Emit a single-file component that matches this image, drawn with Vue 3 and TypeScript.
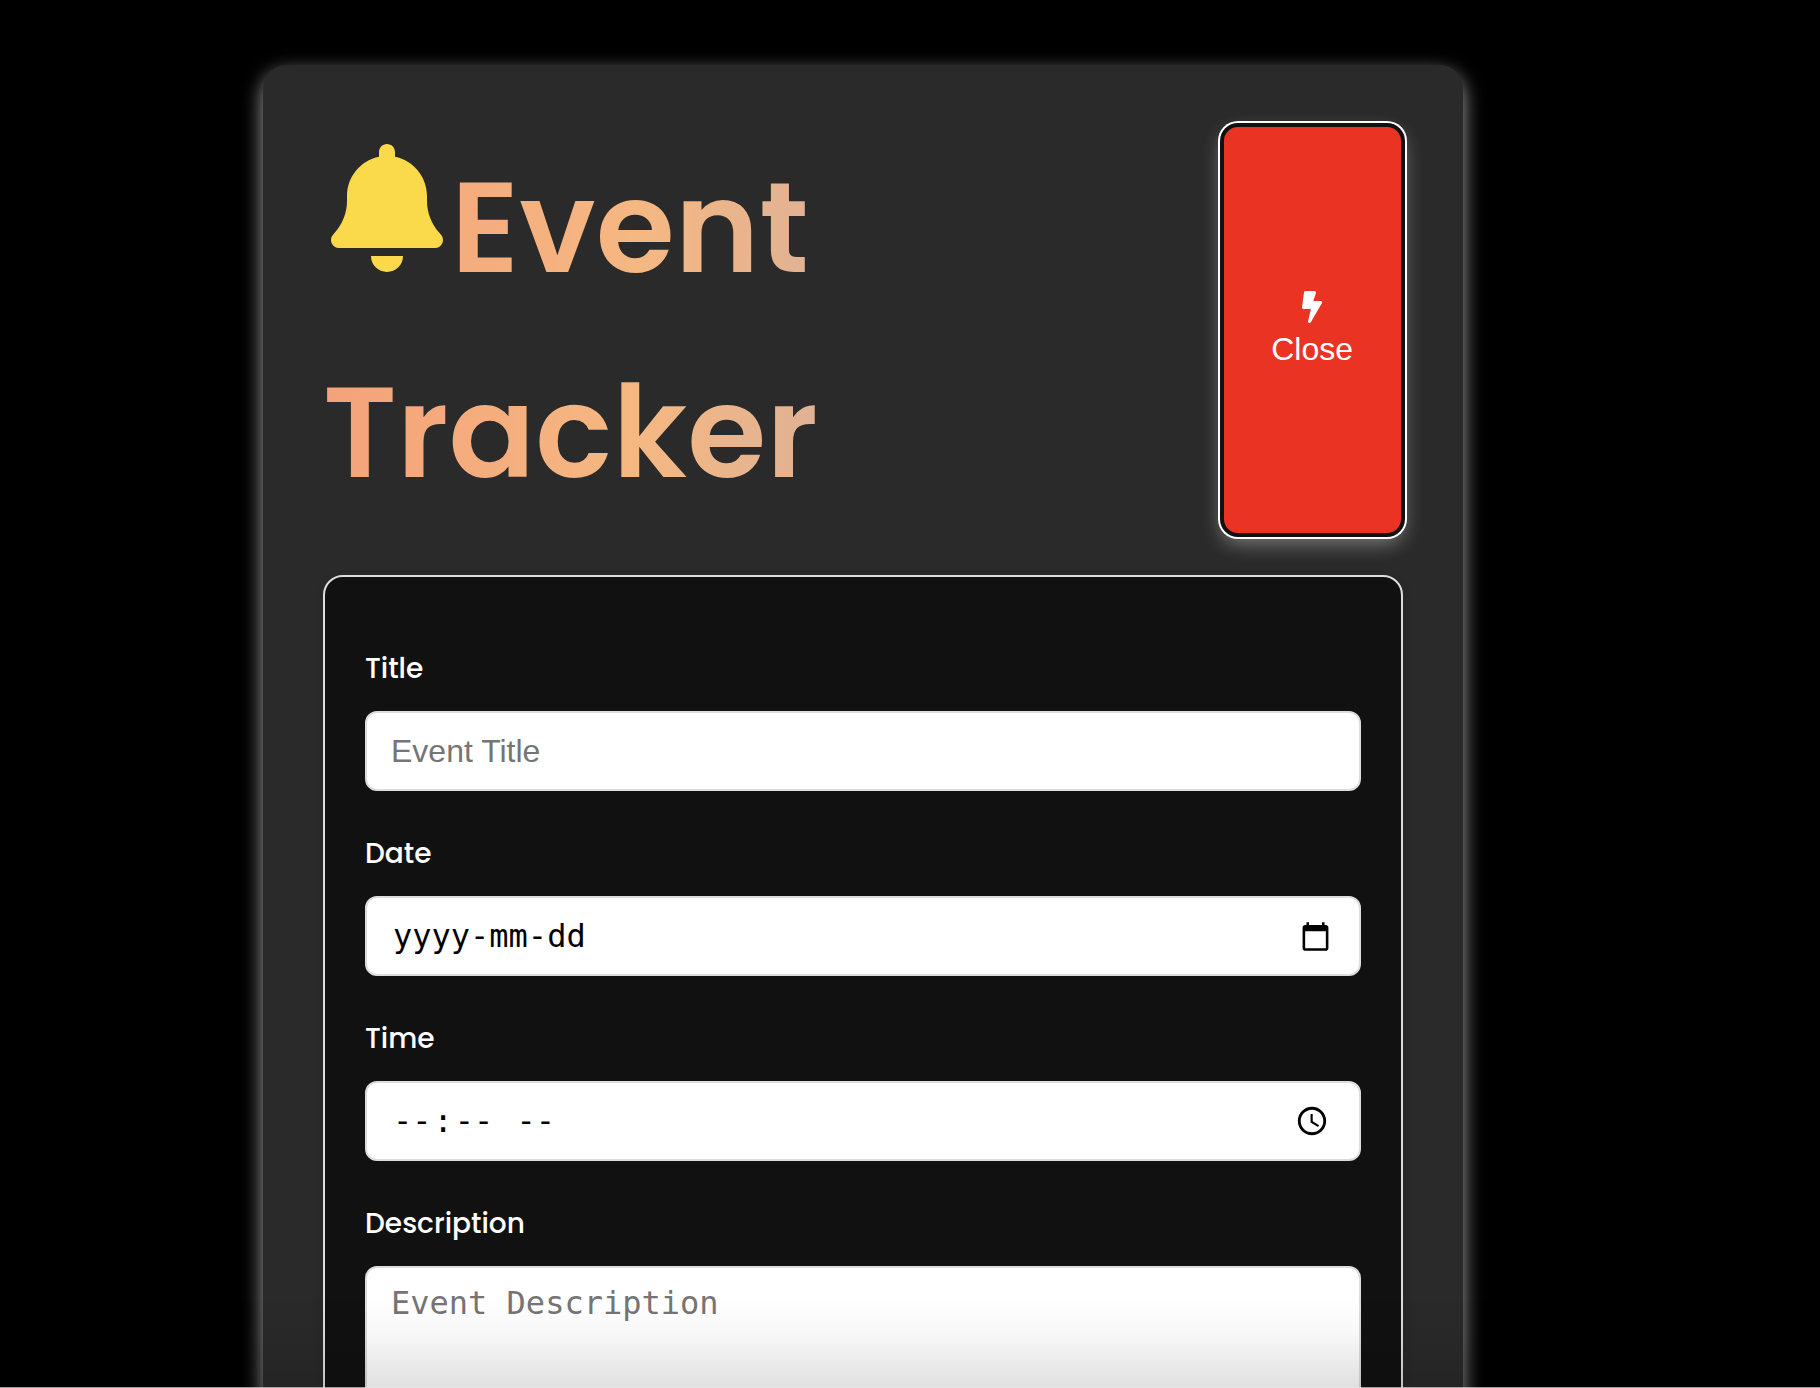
<script setup lang="ts">
import { ref } from 'vue'

const title = ref('')
const date = ref('')
const time = ref('')
const description = ref('')
const dateInput = ref<HTMLInputElement | null>(null)
</script>

<template>
  <div class="page">
    <main class="card">
      <header class="header">
        <h1 class="heading">
          <svg class="bell" viewBox="0 0 448 512" aria-hidden="true">
            <path
              d="M224 0c-17.7 0-32 14.3-32 32l0 19.2C119 66 64 130.6 64 208l0 18.8c0 47-17.3 92.4-48.5 127.6l-7.4 8.3c-8.4 9.4-10.4 22.9-5.3 34.4S19.4 416 32 416l384 0c12.6 0 24-7.4 29.2-18.9s3.1-25-5.3-34.4l-7.4-8.3C401.3 319.2 384 273.9 384 226.8l0-18.8c0-77.4-55-142-128-156.8L256 32c0-17.7-14.3-32-32-32zm45.3 493.3c12-12 18.7-28.3 18.7-45.3l-64 0-64 0c0 17 6.7 33.3 18.7 45.3s28.3 18.7 45.3 18.7s33.3-6.7 45.3-18.7z"
            /></svg>Event Tracker
        </h1>
        <button class="close" type="button">
          <svg class="bolt" viewBox="0 0 320 512" aria-hidden="true">
            <path
              d="M296 160H180.6l42.6-129.8C227.2 15 215.7 0 200 0H56C44 0 33.8 8.9 32.2 20.8l-32 240C-1.7 275.2 9.5 288 24 288h118.7L96.6 482.5c-3.6 15.2 8 29.5 23.3 29.5 8.4 0 16.4-4.4 20.8-12l176-304c9.3-15.9-2.2-36-20.7-36z"
            />
          </svg>
          <span>Close</span>
        </button>
      </header>

      <form class="form" @submit.prevent>
        <div class="field">
          <label for="title">Title</label>
          <input id="title" v-model="title" class="control" type="text" placeholder="Event Title" />
        </div>
        <div class="field">
          <label for="date">Date</label>
          <div class="control date">
            <input
              id="date"
              ref="dateInput"
              v-model="date"
              type="text"
              inputmode="numeric"
              placeholder="yyyy-mm-dd"
            />
            <button class="picker" type="button" aria-label="Show date picker" @click="dateInput?.focus()">
              <svg viewBox="0 0 24 24" aria-hidden="true">
                <path
                  d="M20 3h-1V1h-2v2H7V1H5v2H4c-1.1 0-2 .9-2 2v16c0 1.1.9 2 2 2h16c1.1 0 2-.9 2-2V5c0-1.1-.9-2-2-2zm0 18H4V8h16v13z"
                />
              </svg>
            </button>
          </div>
        </div>
        <div class="field">
          <label for="time">Time</label>
          <input id="time" v-model="time" class="control mono" type="time" />
        </div>
        <div class="field">
          <label for="description">Description</label>
          <textarea
            id="description"
            v-model="description"
            class="control mono area"
            placeholder="Event Description"
          ></textarea>
        </div>
      </form>
    </main>
    <div class="bottom-shade"></div>
  </div>
</template>

<style>
body {
  margin: 0;
  background: #000;
}
</style>

<style scoped>
* {
  box-sizing: border-box;
}

.page {
  height: 100vh;
  padding: 65px 94px 65px 0;
  overflow: hidden auto;
  scrollbar-width: none;
  background: #000;
  color: #fff;
  font-family: Poppins, Inter, sans-serif;
}

.card {
  max-width: 1200px;
  margin: 0 auto;
  padding: 60px;
  border-radius: 24px;
  background: #2a2a2a;
  box-shadow: 0 8px 20px rgba(255, 255, 255, 0.66);
}

.header {
  display: flex;
  justify-content: space-between;
  margin-bottom: 40px;
}

.heading {
  width: 57%;
  margin: 0;
  background: linear-gradient(90deg, #f4a27a, #f5b882 51%, #d2ada1);
  background-clip: text;
  -webkit-background-clip: text;
  color: transparent;
  font-size: 128px;
  font-weight: 600;
  line-height: 205px;
}

.bell {
  width: 112px;
  height: 128px;
  margin: 0 8px;
  fill: #fada4a;
  vertical-align: baseline;
}

.close {
  display: flex;
  flex-direction: column;
  align-items: center;
  justify-content: center;
  gap: 8px;
  padding: 20px 48px 22px 47px;
  border: 2px solid #111;
  border-radius: 16px;
  background: #ea3323;
  box-shadow:
    0 0 0 2px #111,
    0 0 0 4px #fff,
    0 8px 20px rgba(255, 255, 255, 0.4);
  color: #fff;
  font: 32px/37px 'Liberation Sans', Arial, sans-serif;
  cursor: pointer;
}

.bolt {
  width: 20px;
  height: 32px;
  fill: currentColor;
}

.form {
  display: flex;
  flex-direction: column;
  gap: 40px;
  padding: 69px 40px 40px;
  border: 2px solid #ddd;
  border-radius: 20px;
  background: #111;
  box-shadow: 0 4px 12px rgba(0, 0, 0, 0.1);
}

.field {
  display: flex;
  flex-direction: column;
  gap: 20px;
}

label {
  font-size: 28px;
  font-weight: 500;
  line-height: 45px;
}

.control {
  width: 100%;
  height: 80px;
  padding: 0 24px;
  border: 2px solid #ddd;
  border-radius: 12px;
  background: #fff;
  color: #000;
  font: 32px/37px 'Liberation Sans', Arial, sans-serif;
}

.control::placeholder {
  color: #757575;
}

.mono,
.date input {
  font-family: 'DejaVu Sans Mono', monospace;
}

.control::-webkit-datetime-edit-hour-field,
.control::-webkit-datetime-edit-minute-field,
.control::-webkit-datetime-edit-ampm-field {
  padding: 0 2px;
}

.control::-webkit-calendar-picker-indicator {
  margin-right: 3px;
}

.date {
  display: flex;
  align-items: center;
}

.date input {
  flex: 1;
  min-width: 0;
  padding: 0 2px;
  border: 0;
  outline: 0;
  background: none;
  font-size: 32px;
  line-height: 37px;
}

.date input::placeholder {
  color: #000;
  opacity: 1;
}

.picker {
  width: 31px;
  height: 32px;
  margin-right: 4px;
  padding: 0;
  border: 0;
  background: none;
  cursor: pointer;
}

.picker svg {
  display: block;
}

.area {
  height: 200px;
  padding: 17px 24px;
  resize: none;
}

.bottom-shade {
  position: fixed;
  inset: auto 0 0;
  height: 88px;
  border-bottom: 1px solid rgba(221, 221, 221, 0.7);
  background: linear-gradient(transparent, rgba(0, 0, 0, 0.03) 40%, rgba(0, 0, 0, 0.12));
  pointer-events: none;
}
</style>
